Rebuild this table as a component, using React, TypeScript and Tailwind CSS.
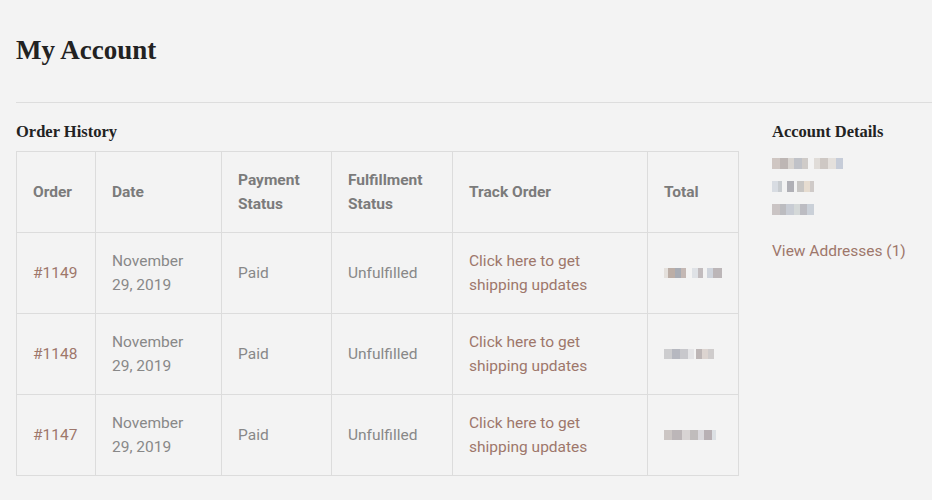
const orders = [
  { id: "#1149", total: [["#e4e0dc", 4], ["#bcaea6", 8], ["#a8acb4", 6], ["#c4b8b4", 6], ["", 6], ["#dfe2e6", 6], ["#c2bcbe", 6], ["", 4], ["#cfd4dc", 6], ["#bcb6b8", 10]] },
  { id: "#1148", total: [["#cdcdcf", 8], ["#b6b8c0", 8], ["#c8c8cc", 8], ["#e4e4e6", 6], ["", 2], ["#bdb6b6", 6], ["#dcd4d0", 6], ["#cfcccc", 6]] },
  { id: "#1147", total: [["#ccc6c4", 8], ["#bcb6b8", 10], ["#d8d4d4", 8], ["#c0bcbc", 8], ["#dad8dc", 6], ["#b8b0b4", 8], ["#dce0e4", 4]] },
]

type Seg = (string | number)[]

const Pixels = ({ segs, h = 10 }: { segs: Seg[]; h?: number }) => (
  <div className="flex items-center blur-[0.7px]">
    {segs.map(([c, w], i) => (
      <div key={i} style={{ width: Number(w), height: h, background: c ? String(c) : "transparent" }} />
    ))}
  </div>
)

const App = () => {
  const cell = "border border-[#dcdcdc] px-4 py-4 align-middle text-left"
  const head = "border border-[#dcdcdc] px-4 py-4 align-middle text-left font-bold text-[#7b7b7b]"

  return (
    <div className="min-h-[500px] bg-[#f3f3f3] text-[15.5px] leading-6 text-[#888888] font-['Roboto',sans-serif]">
      <h1 className="px-4 pt-[35px] pb-[36px] text-[27px] leading-[31px] font-bold text-[#222222] font-['Liberation_Serif',serif]">
        My Account
      </h1>
      <div className="ml-4 border-t border-[#dddddd]" />

      <div className="flex gap-[34px] px-4 pt-[19px]">
        <div className="w-[722px] shrink-0">
          <h2 className="mb-[9px] text-[16.5px] leading-5 font-bold text-[#222222] font-['Liberation_Serif',serif]">
            Order History
          </h2>
          <table className="w-[722px] table-fixed border-collapse">
            <colgroup>
              <col className="w-[79px]" />
              <col className="w-[126px]" />
              <col className="w-[110px]" />
              <col className="w-[121px]" />
              <col className="w-[195px]" />
              <col className="w-[91px]" />
            </colgroup>
            <thead>
              <tr>
                <th className={head}>Order</th>
                <th className={head}>Date</th>
                <th className={head}>Payment Status</th>
                <th className={head}>Fulfillment Status</th>
                <th className={head}>Track Order</th>
                <th className={head}>Total</th>
              </tr>
            </thead>
            <tbody>
              {orders.map((o) => (
                <tr key={o.id}>
                  <td className={cell}>
                    <span className="text-[#9e776b]">{o.id}</span>
                  </td>
                  <td className={cell}>November 29, 2019</td>
                  <td className={cell}>Paid</td>
                  <td className={cell}>Unfulfilled</td>
                  <td className={cell}>
                    <span className="text-[#9e776b]">Click here to get shipping updates</span>
                  </td>
                  <td className={cell}>
                    <Pixels segs={o.total} />
                  </td>
                </tr>
              ))}
            </tbody>
          </table>
        </div>

        <div className="w-[160px]">
          <h2 className="text-[16.5px] leading-5 font-bold text-[#222222] font-['Liberation_Serif',serif]">
            Account Details
          </h2>
          <div className="mt-[10px] flex flex-col">
            <div className="flex h-[23px] items-center">
              <Pixels segs={[["#cfc6c2", 8], ["#bdb6b4", 8], ["#d8d4d0", 6], ["#c0c2c8", 8], ["#cfcbc8", 6], ["", 6], ["#e0dcd8", 6], ["#cec8c4", 8], ["#e4e0dc", 8], ["#c6ccd8", 7]]} h={11} />
            </div>
            <div className="flex h-[23px] items-center">
              <Pixels segs={[["#d8dce2", 6], ["#c8ccd0", 4], ["", 5], ["#b0b0b6", 7], ["", 3], ["#c8c6c4", 7], ["#e6dcd0", 6], ["#cfcac8", 4]]} h={11} />
            </div>
            <div className="flex h-[23px] items-center">
              <Pixels segs={[["#cac4c4", 8], ["#bcbcc0", 6], ["#c8ccd4", 8], ["#d4d8d8", 6], ["#bcbcc2", 7], ["#cad0d8", 7]]} h={11} />
            </div>
          </div>
          <a className="mt-[18px] block text-[#9e776b]">View Addresses (1)</a>
        </div>
      </div>
    </div>
  )
}

export default App
